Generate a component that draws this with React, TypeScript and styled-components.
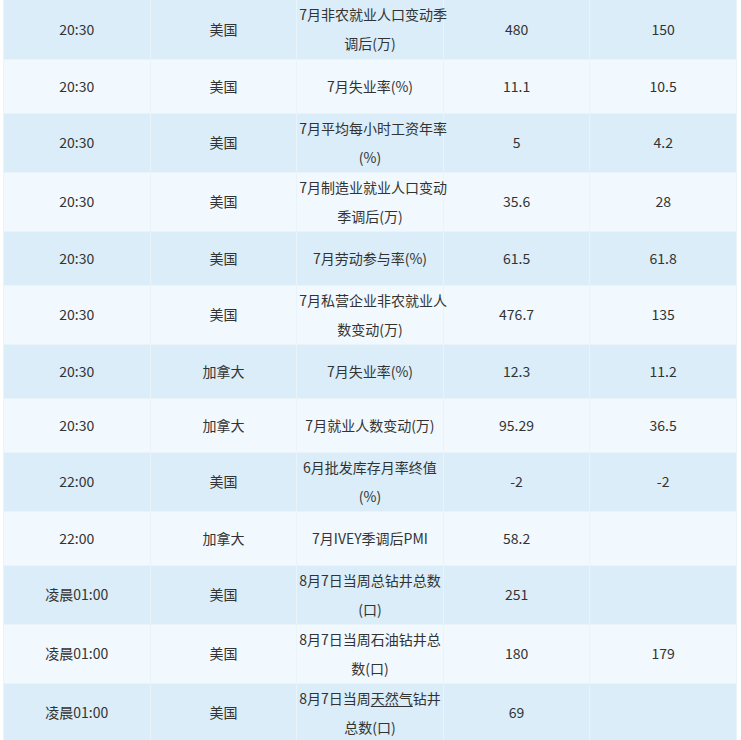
import React from "react"
import styled, { createGlobalStyle } from "styled-components"

type Row = {
  time: string
  country: string
  event: React.ReactNode
  prev: string
  forecast: string
  tall?: boolean
}

const GlobalStyle = createGlobalStyle`
  html, body {
    margin: 0;
    padding: 0;
    background: #ffffff;
  }
`

const Wrapper = styled.div`
  padding: 0 4px 0 3px;
  font-family: "Noto Sans CJK SC", "Noto Sans", sans-serif;
  font-size: 14px;
  color: #333333;
`

const Table = styled.table`
  width: 100%;
  border-collapse: collapse;
  table-layout: fixed;
`

const Tr = styled.tr<{ $striped: boolean; $tall?: boolean }>`
  background: ${(p) => (p.$striped ? "#daedf8" : "#f1f8fe")};
  height: ${(p) => (p.$tall ? "57px" : "54px")};

  &:first-child {
    height: 59px;
  }
`

const Td = styled.td`
  padding: 0 2px;
  border: 1px solid #e9f3fa;
  border-top: none;
  text-align: center;
  vertical-align: middle;
  line-height: 29px;
  white-space: nowrap;
`

const Under = styled.span`
  text-decoration: underline;
  text-underline-offset: 2px;
`

const rows: Row[] = [
  { time: "20:30", country: "美国", event: <>7月非农就业人口变动季<br />调后(万)</>, prev: "480", forecast: "150", tall: true },
  { time: "20:30", country: "美国", event: "7月失业率(%)", prev: "11.1", forecast: "10.5" },
  { time: "20:30", country: "美国", event: <>7月平均每小时工资年率<br />(%)</>, prev: "5", forecast: "4.2", tall: true },
  { time: "20:30", country: "美国", event: <>7月制造业就业人口变动<br />季调后(万)</>, prev: "35.6", forecast: "28", tall: true },
  { time: "20:30", country: "美国", event: "7月劳动参与率(%)", prev: "61.5", forecast: "61.8" },
  { time: "20:30", country: "美国", event: <>7月私营企业非农就业人<br />数变动(万)</>, prev: "476.7", forecast: "135", tall: true },
  { time: "20:30", country: "加拿大", event: "7月失业率(%)", prev: "12.3", forecast: "11.2" },
  { time: "20:30", country: "加拿大", event: "7月就业人数变动(万)", prev: "95.29", forecast: "36.5" },
  { time: "22:00", country: "美国", event: <>6月批发库存月率终值<br />(%)</>, prev: "-2", forecast: "-2", tall: true },
  { time: "22:00", country: "加拿大", event: "7月IVEY季调后PMI", prev: "58.2", forecast: "" },
  { time: "凌晨01:00", country: "美国", event: <>8月7日当周总钻井总数<br />(口)</>, prev: "251", forecast: "", tall: true },
  { time: "凌晨01:00", country: "美国", event: <>8月7日当周石油钻井总<br />数(口)</>, prev: "180", forecast: "179", tall: true },
  { time: "凌晨01:00", country: "美国", event: <>8月7日当周<Under>天然气</Under>钻井<br />总数(口)</>, prev: "69", forecast: "", tall: true },
]

const App: React.FC = () => {
  return (
    <Wrapper>
      <GlobalStyle />
      <Table>
        <tbody>
          {rows.map((r, i) => (
            <Tr key={i} $striped={i % 2 === 0} $tall={r.tall}>
              <Td>{r.time}</Td>
              <Td>{r.country}</Td>
              <Td>{r.event}</Td>
              <Td>{r.prev}</Td>
              <Td>{r.forecast}</Td>
            </Tr>
          ))}
        </tbody>
      </Table>
    </Wrapper>
  )
}

export default App
